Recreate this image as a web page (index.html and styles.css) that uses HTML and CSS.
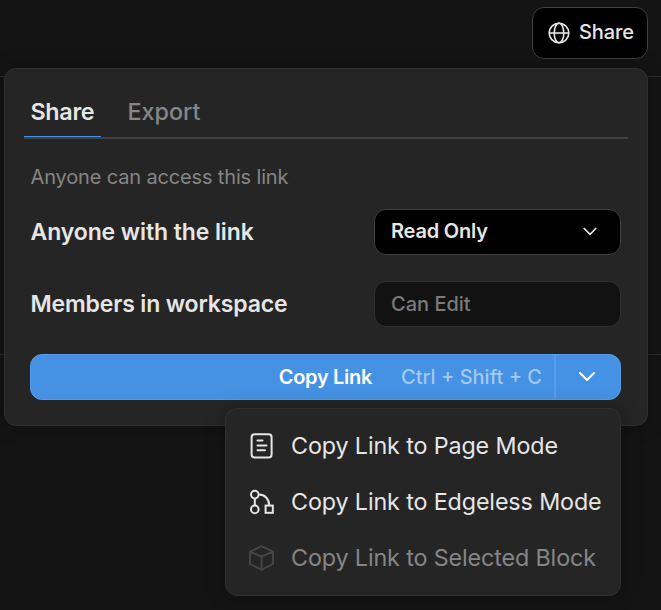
FILE: index.html
```html
<!DOCTYPE html>
<html lang="en">
<head>
<meta charset="utf-8">
<title>Share</title>
<link rel="stylesheet" href="styles.css">
</head>
<body>
<header class="topbar">
  <button class="share-button">
    <svg width="22" height="22" viewBox="0 0 22 22" fill="none" stroke="currentColor" stroke-width="1.6"><circle cx="11" cy="11" r="9.8"/><ellipse cx="11" cy="11" rx="4.8" ry="9.8"/><path d="M1.2 11h19.6"/></svg>
    <span class="share-label">Share</span>
  </button>
</header>
<main class="page"><div class="divider"></div></main>
<section class="panel">
  <nav class="tabs">
    <span class="tab active">Share</span>
    <span class="tab">Export</span>
  </nav>
  <p class="hint">Anyone can access this link</p>
  <div class="row">
    <span class="row-label">Anyone with the link</span>
    <button class="select"><span>Read Only</span>
      <svg width="14" height="9" viewBox="0 0 14 9" fill="none" stroke="currentColor" stroke-width="1.7" stroke-linecap="round" stroke-linejoin="round"><path d="M1.2 1.5 7 7.3l5.8-5.8"/></svg>
    </button>
  </div>
  <div class="row">
    <span class="row-label members">Members in workspace</span>
    <button class="select disabled"><span>Can Edit</span></button>
  </div>
  <div class="copy">
    <div class="copy-main"><span class="copy-label">Copy Link</span><span class="shortcut">Ctrl + Shift + C</span></div>
    <div class="copy-more">
      <svg width="18" height="11" viewBox="0 0 18 11" fill="none" stroke="currentColor" stroke-width="2.1" stroke-linecap="round" stroke-linejoin="round"><path d="M2 2l7 7 7-7"/></svg>
    </div>
  </div>
</section>
<div class="menu">
  <div class="item">
    <svg width="26" height="26" viewBox="0 0 26 26" fill="none" stroke="currentColor" stroke-width="2" stroke-linecap="round"><rect x="3.6" y="1.2" width="20" height="23.2" rx="3"/><path d="M9.5 7.5h5M9.5 12.4h9M9.5 17.2h7.5"/></svg>
    <span>Copy Link to Page Mode</span>
  </div>
  <div class="item">
    <svg width="26" height="26" viewBox="0 0 26 26" fill="none" stroke="currentColor" stroke-width="2"><circle cx="6.8" cy="5.6" r="3.8"/><circle cx="6.8" cy="20.4" r="3.8"/><path d="M6.8 9.4v7.2M10.6 5.6C17 5.6 21.2 10 21.2 16.6"/><rect x="17.6" y="16.6" width="7.2" height="7.2"/></svg>
    <span>Copy Link to Edgeless Mode</span>
  </div>
  <div class="item muted">
    <svg width="26" height="26" viewBox="0 0 26 26" fill="none" stroke="currentColor" stroke-width="2" stroke-linejoin="round"><path d="M13.5 1.2 25 6.7v12.2L13.5 24.8 2 18.9V6.7ZM2 6.7l11.5 4.8L25 6.7M13.5 11.5v13.3"/></svg>
    <span>Copy Link to Selected Block</span>
  </div>
</div>
</body>
</html>
```
FILE: styles.css
```css
* { box-sizing: border-box; }
body {
  margin: 0;
  height: 610px;
  overflow: hidden;
  position: relative;
  background: #141414;
  color: #e6e6e6;
  font-family: Inter, "Liberation Sans", sans-serif;
}
button { font: inherit; color: inherit; }
svg { display: block; flex: none; }
.topbar {
  display: flex;
  justify-content: flex-end;
  height: 77px;
  padding: 7px 13px 0 0;
  border-bottom: 1px solid #2c2c2c;
}
.share-button {
  display: flex;
  align-items: center;
  gap: 9px;
  width: 116px;
  height: 52px;
  padding: 0 0 0 15px;
  border: 1px solid #404040;
  border-radius: 12px;
  background: #000;
  font-size: 20px;
  font-weight: 500;
  letter-spacing: -.1px;
}
.share-label { line-height: 28px; margin-top: -2px; }
.page { padding-top: 277px; }
.divider { height: 1px; background: #2c2c2c; }
.panel {
  position: absolute;
  left: 4px;
  top: 68px;
  width: 644px;
  height: 358px;
  padding: 19px 19px 0;
  border: 1px solid #303030;
  border-radius: 12px;
  background: #252525;
  box-shadow: 0 0 20px rgba(0, 0, 0, .3);
}
.tabs {
  display: flex;
  gap: 20px;
  height: 51px;
  border-bottom: 2px solid #424242;
  color: #868686;
  font-size: 23.3px;
  font-weight: 500;
}
.tab { height: 49px; padding: 0 6.5px; line-height: 47px; }
.active { width: 77px; border-bottom: 1px solid #4592e4; color: #e6e6e6; font-weight: 600; letter-spacing: -.3px; }
.hint {
  margin: 24px 0 0 6.5px;
  font-size: 20px;
  line-height: 28px;
  letter-spacing: -.15px;
  color: #868686;
}
.row {
  display: flex;
  align-items: center;
  justify-content: space-between;
  height: 46px;
  margin: 18px 7px 26px 6.5px;
}
.row-label { font-size: 23px; font-weight: 600; letter-spacing: -.1px; margin-top: -1px; }
.members { letter-spacing: -.15px; }
.row + .row { margin-top: 0; margin-bottom: 27px; }
.select {
  display: flex;
  align-items: center;
  justify-content: space-between;
  width: 247px;
  height: 46px;
  padding: 0 23px 2px 16px;
  border: 1px solid #404040;
  border-radius: 12px;
  background: #000;
  font-size: 20px;
  font-weight: 600;
  letter-spacing: -.2px;
}
.disabled { padding-bottom: 0; background: #121212; border-color: #303030; color: #7b7b7b; font-weight: 500; letter-spacing: 0; }
.copy {
  display: flex;
  width: 591px;
  height: 46px;
  margin-left: 6px;
  border: 1px solid #589ce7;
  border-radius: 12px;
  background: #4592e4;
  color: #fff;
  font-size: 20px;
}
.copy-main {
  display: flex;
  align-items: center;
  justify-content: flex-end;
  gap: 29px;
  width: 525px;
  padding-right: 12px;
  border-right: 2px solid #589ce7;
  font-weight: 600;
}
.copy-label { letter-spacing: -.3px; }
.shortcut { color: #a2c9f1; font-weight: 500; }
.copy-more { flex: 1; display: flex; align-items: center; justify-content: center; padding: 0 2px 1px 0; }
.menu {
  position: absolute;
  left: 225px;
  top: 408px;
  width: 396px;
  height: 188px;
  padding: 9px 0 0 22px;
  border: 1px solid #303030;
  border-radius: 12px;
  background: #252525;
  box-shadow: 0 0 20px rgba(0, 0, 0, .25);
}
.item {
  display: flex;
  align-items: center;
  gap: 17px;
  height: 56px;
  font-size: 23.3px;
  letter-spacing: -.12px;
  white-space: nowrap;
}
.item span { margin-top: -1px; }
.muted { color: #868686; }
.muted svg { color: #444; }
```
